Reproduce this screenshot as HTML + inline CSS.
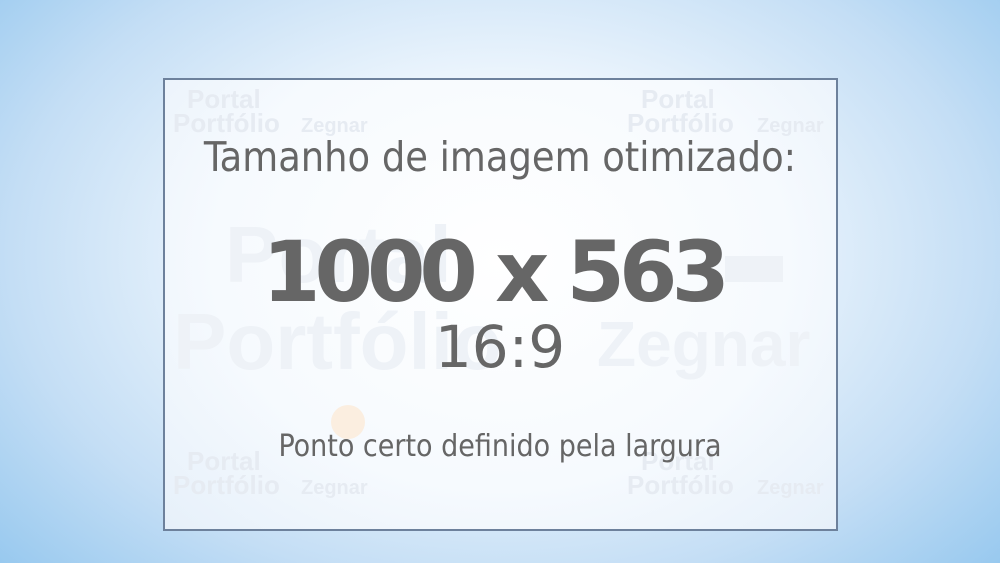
<!DOCTYPE html>
<html><head><meta charset="utf-8"><style>
html,body{margin:0;padding:0}
body{width:1000px;height:563px;overflow:hidden;position:relative;font-family:"DejaVu Sans","Liberation Sans",sans-serif;
background:radial-gradient(ellipse 70% 85% at 50% 45%,#ffffff 0%,#eef6fd 35%,#c4def5 70%,#92c6ee 100%);}
.box{position:absolute;left:163px;top:78px;width:671px;height:449px;border:2px solid #6d819c;
background:radial-gradient(ellipse at 50% 40%,#ffffff 0%,#f6fafe 60%,#e6f0fa 100%);overflow:hidden}
.t{position:absolute;left:0;width:100%;text-align:center;color:#666;white-space:nowrap;line-height:1}
.c{font-family:"DejaVu Sans Condensed","DejaVu Sans",sans-serif;font-stretch:condensed}
.wm{position:absolute;color:#e6ebf2;font-weight:bold;white-space:nowrap;line-height:1;font-family:"Liberation Sans",sans-serif}
</style></head><body>
<div class="box">
 <div class="wm" style="left:22px;top:6px;font-size:26px">Portal</div>
 <div class="wm" style="left:8px;top:30px;font-size:26px">Portfólio</div>
 <div class="wm" style="left:136px;top:36px;font-size:20px">Zegnar</div>
 <div class="wm" style="left:476px;top:6px;font-size:26px">Portal</div>
 <div class="wm" style="left:462px;top:30px;font-size:26px">Portfólio</div>
 <div class="wm" style="left:592px;top:36px;font-size:20px">Zegnar</div>
 <div class="wm" style="left:22px;top:368px;font-size:26px">Portal</div>
 <div class="wm" style="left:8px;top:392px;font-size:26px">Portfólio</div>
 <div class="wm" style="left:136px;top:398px;font-size:20px">Zegnar</div>
 <div class="wm" style="left:476px;top:368px;font-size:26px">Portal</div>
 <div class="wm" style="left:462px;top:392px;font-size:26px">Portfólio</div>
 <div class="wm" style="left:592px;top:398px;font-size:20px">Zegnar</div>
 <div class="wm" style="left:60px;top:135px;font-size:80px;color:#eef2f7">Portal</div>
 <div class="wm" style="left:8px;top:222px;font-size:80px;color:#eef2f7">Portfólio</div>
 <div class="wm" style="left:432px;top:232px;font-size:64px;color:#eef2f7">Zegnar</div>
 <div style="position:absolute;left:166px;top:325px;width:34px;height:34px;border-radius:50%;background:#fbeee0"></div>
 <div style="position:absolute;left:560px;top:176px;width:58px;height:26px;background:#eef2f7"></div>
</div>
<div class="t c" style="top:137px;font-size:41px">Tamanho de imagem otimizado:</div>
<div class="t" style="top:230px;left:-7px;font-size:84px;font-weight:bold;letter-spacing:-6px">1000 x 563</div>
<div class="t" style="top:318px;font-size:58px">16:9</div>
<div class="t c" style="top:432px;font-size:30px">Ponto certo definido pela largura</div>
</body></html>
